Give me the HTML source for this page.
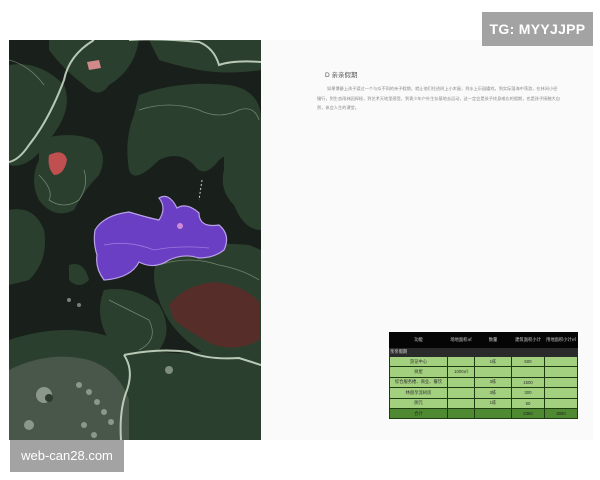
<!DOCTYPE html>
<html><head><meta charset="utf-8"><style>
html,body{margin:0;padding:0;width:600px;height:480px;background:#fff;overflow:hidden;font-family:"Liberation Sans","Noto Sans CJK SC",sans-serif}
.pg{position:absolute;left:260px;top:40px;width:333px;height:400px;background:#fafafa}
.map{position:absolute;left:9px;top:40px;width:252px;height:400px}
.tg{position:absolute;left:482px;top:12px;width:111px;height:34px;background:#a3a3a3;color:#fff;font-size:14px;font-weight:bold;line-height:34px;text-align:center;letter-spacing:.3px}
.wc{position:absolute;left:10px;top:440px;width:114px;height:32px;background:#a3a3a3;color:#fff;font-size:13px;line-height:32px;text-align:center}
h3{position:absolute;left:325px;top:69px;margin:0;font-size:6.5px;font-weight:normal;color:#555}
.txt{position:absolute;left:317px;top:84px;width:244px;font-size:4.2px;line-height:9.5px;color:#888;text-indent:10px}
table{position:absolute;left:389px;top:332px;width:188px;border-collapse:collapse;font-size:4.3px;text-align:center;table-layout:fixed}
td{border:0.6px solid #1d3a10;height:9.4px;padding:0;color:#333;overflow:hidden;white-space:nowrap}
.hd td{background:#050505;color:#ccc;height:14px;border-color:#050505;white-space:normal}
.sec td{background:#2a2a2a;color:#ddd;text-align:left;height:8px;border-color:#2a2a2a}
.g td{background:#a3d07e}
.t td{background:#4f8a32;color:#222}
</style></head><body>
<div class="pg"></div>
<svg class="map" viewBox="0 0 252 400" preserveAspectRatio="none">
<rect width="252" height="400" fill="#19201b"/>
<g fill="#2b3f2e">
<path d="M0 25 Q30 20 55 45 Q65 70 40 100 Q20 130 0 125Z"/>
<path d="M40 0 L130 0 Q125 30 100 45 Q90 60 75 45 Q55 30 40 10Z"/>
<path d="M140 0 L252 0 L252 30 Q220 35 190 30 Q165 25 150 20Z"/>
<path d="M130 55 Q170 40 220 45 Q252 50 252 80 L252 110 Q230 105 210 120 Q195 140 185 125 Q170 110 150 120 Q125 145 120 130 Q115 100 125 75Z"/>
<path d="M30 100 Q60 90 85 100 Q100 115 90 135 Q75 150 65 170 Q45 180 30 160 Q20 140 30 120Z"/>
<path d="M0 170 Q25 165 35 190 Q40 220 20 240 L0 245Z"/>
<path d="M215 110 L252 105 L252 190 Q235 190 225 165 Q210 150 215 130Z"/>
<path d="M60 225 Q75 220 80 240 Q70 250 60 240Z"/>
<path d="M150 215 Q190 200 240 205 L252 210 L252 320 Q220 330 190 310 Q160 290 150 260 Q140 235 150 215Z"/>
<path d="M95 250 Q125 245 150 265 Q165 290 150 310 Q120 320 100 300 Q85 275 95 250Z"/>
<path d="M0 300 Q60 280 110 300 Q160 320 200 310 L252 315 L252 400 L0 400Z"/>
</g>
<path d="M160 265 Q175 245 205 242 Q235 245 250 262 L250 300 Q230 312 205 305 Q180 292 165 280Z" fill="#5e2a28" opacity=".85"/>
<path d="M40 115 Q55 108 58 120 Q55 135 45 135 Q38 128 40 115Z" fill="#c05050"/>
<path d="M78 22 L90 20 L92 28 L80 30Z" fill="#d08a8a"/>
<g fill="#48574a"><path d="M0 330 Q40 310 80 320 Q110 330 120 360 L120 400 L0 400Z"/></g>
<g fill="#b8c2b5" opacity=".6">
<circle cx="35" cy="355" r="8"/><circle cx="70" cy="345" r="3"/><circle cx="80" cy="352" r="3"/><circle cx="88" cy="362" r="3"/><circle cx="95" cy="372" r="3"/><circle cx="102" cy="382" r="3"/><circle cx="60" cy="260" r="2"/><circle cx="70" cy="265" r="2"/><circle cx="160" cy="330" r="4"/><circle cx="20" cy="385" r="5"/><circle cx="75" cy="385" r="3"/><circle cx="85" cy="395" r="3"/>
</g>
<circle cx="40" cy="358" r="4" fill="#2f3a30"/>
<g fill="none" stroke="#c8d8c4" stroke-width="2" opacity=".9">
<path d="M85 0 Q60 15 55 40 Q40 80 20 105 Q10 120 0 122"/>
<path d="M120 0 Q150 -2 190 2 Q205 8 210 25 Q225 20 252 22"/>
<path d="M115 315 Q150 308 180 312 Q200 320 230 318 L252 325"/>
<path d="M115 315 Q125 330 118 350 Q110 370 112 400"/>
</g>
<g fill="none" stroke="#9fb59a" stroke-width=".8" opacity=".6">
<path d="M130 70 Q160 60 190 70 Q210 80 230 70 Q245 65 250 80"/>
<path d="M30 135 Q45 150 40 160 Q55 170 70 160 Q80 145 75 130"/>
<path d="M150 225 Q180 215 210 225 Q235 230 250 240"/>
<path d="M100 260 Q120 270 140 280 Q150 300 130 310"/>
<path d="M0 20 Q20 25 35 45"/>
</g>
<path d="M86 190 Q95 175 120 172 Q140 178 150 180 Q158 168 150 158 Q160 152 168 168 Q178 162 190 173 Q190 188 210 185 Q222 195 215 210 Q205 218 190 218 Q175 213 160 220 Q145 230 130 222 Q122 238 95 240 Q86 228 88 215 Q84 203 86 190Z" fill="#6b3fc4" stroke="#b9a0e8" stroke-width="1.2"/>
<path d="M95 205 Q120 200 145 210 Q170 205 200 208" fill="none" stroke="#9a78e0" stroke-width=".8"/>
<circle cx="171" cy="186" r="3" fill="#d08ad8"/>
<path d="M193 140 L190 160" stroke="#ccc" stroke-width="1" stroke-dasharray="2 2"/>
</svg>
<div class="tg">TG: MYYJJPP</div>
<div class="wc">web-can28.com</div>
<h3>D 亲亲假期</h3>
<div class="txt">如果博爵上孩子渡过一个与众不同的亲子假期，就让他们住进树上小木屋，到水上乐园嬉戏，到实际湿海中荡游，在林间小径慢行，到生态雨林园探秘，到艺术天地里感受，到青少年户外生存基地去运动，这一定会是孩子终身难忘的假期，也是孩子接触大自然，体会人生的课堂。</div>
<table>
<colgroup><col style="width:58px"><col style="width:27px"><col style="width:37px"><col style="width:33px"><col style="width:33px"></colgroup>
<tr class="hd"><td>功能</td><td>场地面积㎡</td><td>数量</td><td>建筑面积小计</td><td>用地面积小计㎡</td></tr>
<tr class="sec"><td colspan="5">亲亲假期</td></tr>
<tr class="g"><td>游览中心</td><td></td><td>1栋</td><td>500</td><td></td></tr>
<tr class="g"><td>树屋</td><td>1000㎡</td><td></td><td></td><td></td></tr>
<tr class="g"><td>综合服务楼、商业、餐饮</td><td></td><td>3栋</td><td>1500</td><td></td></tr>
<tr class="g"><td>林盘孕流树房</td><td></td><td>3栋</td><td>300</td><td></td></tr>
<tr class="g"><td>厕元</td><td></td><td>1栋</td><td>50</td><td></td></tr>
<tr class="t"><td>合计</td><td></td><td></td><td>2350</td><td>3050</td></tr>
</table>
</body></html>
